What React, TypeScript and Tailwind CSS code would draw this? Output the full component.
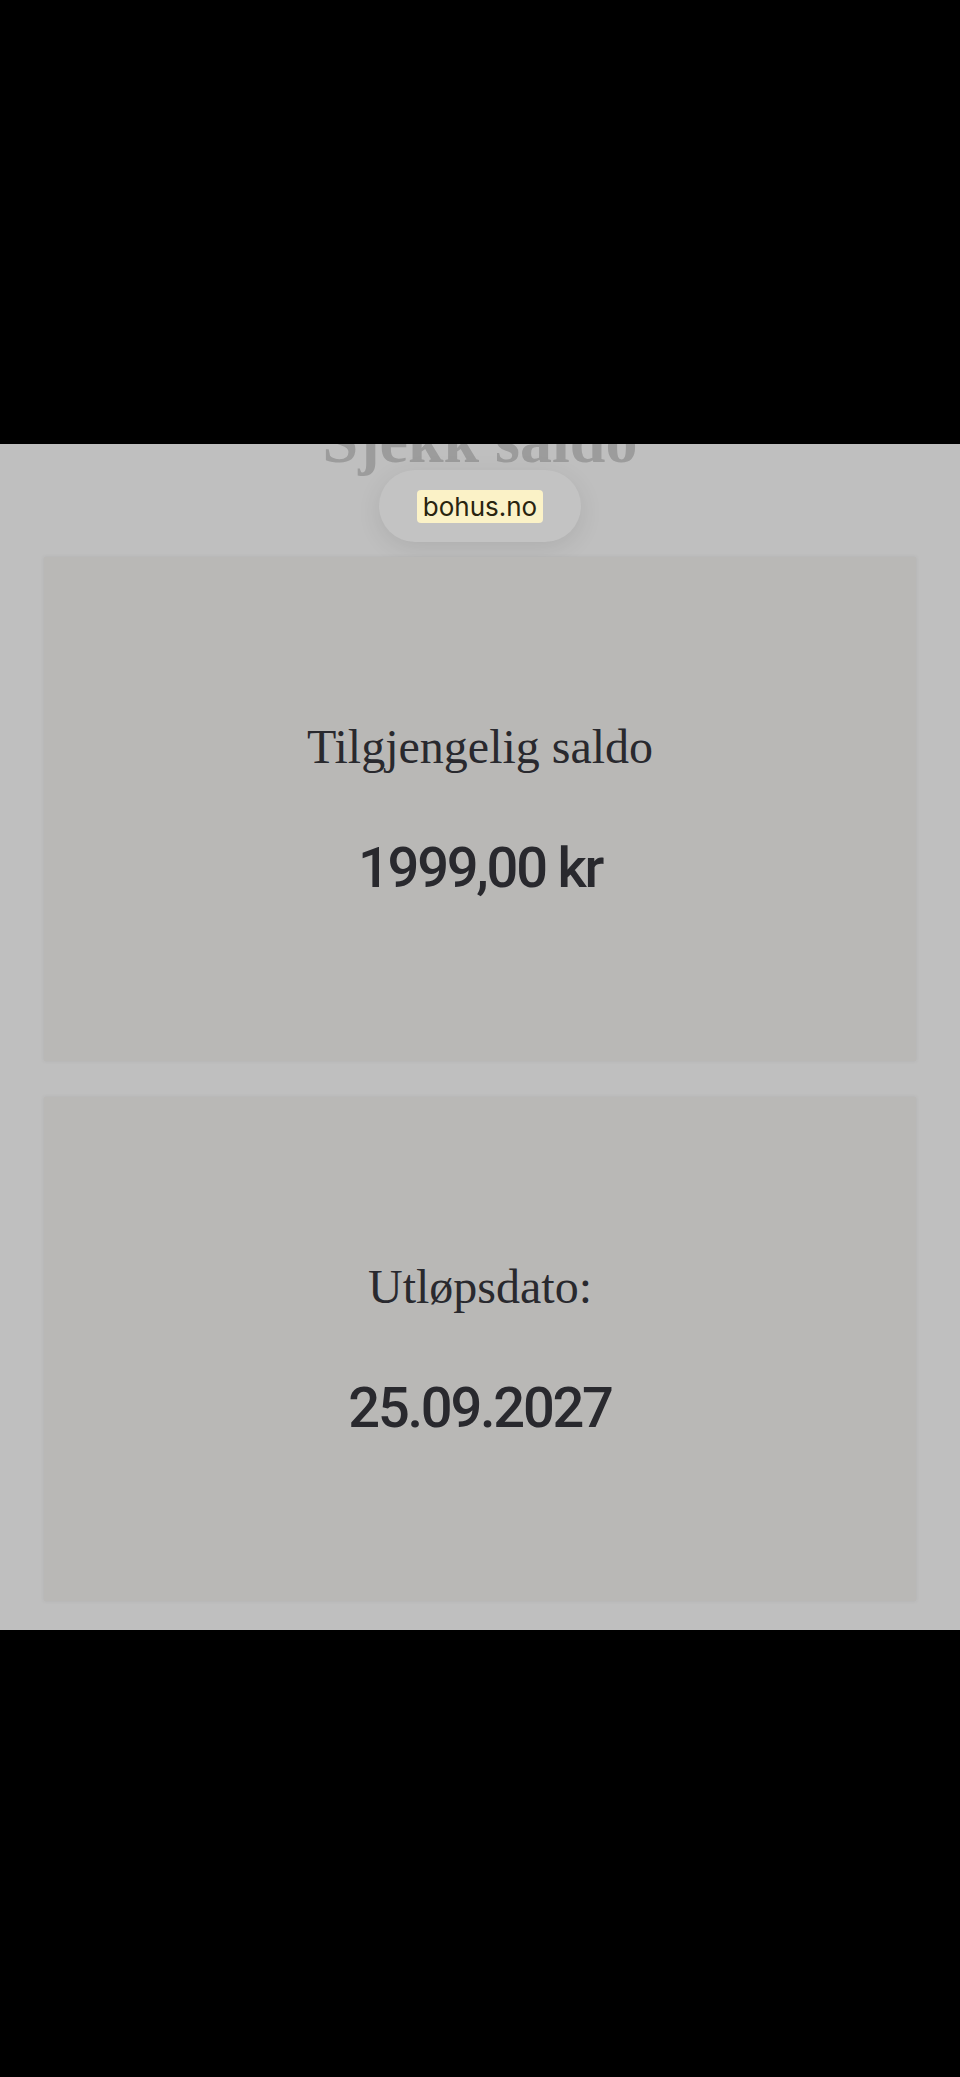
import React from 'react';

interface InfoCard {
  label: string;
  value: string;
}

const cards: InfoCard[] = [
  { label: 'Tilgjengelig saldo', value: '1999,00 kr' },
  { label: 'Utløpsdato:', value: '25.09.2027' },
];

const serif = { fontFamily: '"Liberation Serif", "Times New Roman", serif' };

const App: React.FC = () => {
  return (
    <div className="flex h-[2077px] w-full flex-col bg-black">
      <div className="h-[444px] shrink-0 bg-black" />

      <div className="flex h-[1186px] shrink-0 flex-col items-center overflow-hidden bg-[#bfbfbf] px-[44px]">
        <h1
          className="mt-[-35px] text-center text-[64px] font-bold leading-[64px] text-[#9c9c9c]"
          style={serif}
        >
          Sjekk saldo
        </h1>

        {/* address pill */}
        <div className="mt-[-3px] flex h-[72px] w-[202px] items-center justify-center rounded-full bg-[#c3c3c3] shadow-[0_6px_24px_rgba(0,0,0,0.09)]">
          <span className="rounded-[4px] bg-[#fbf2c7] px-[6px] text-[26px] leading-[33px] text-[#29240f] font-['Inter',sans-serif]">
            bohus.no
          </span>
        </div>

        <div className="mt-[15px] flex w-full flex-col gap-[36px]">
          {cards.map((card) => (
            <div
              key={card.label}
              className="flex h-[504px] flex-col items-center bg-[#b9b8b6] pt-[166px] shadow-[0_0_4px_rgba(0,0,0,0.08)]"
            >
              <p className="text-[48px] leading-[48px] text-[#29292e]" style={serif}>
                {card.label}
              </p>
              <p className="mt-[69px] font-['Roboto',sans-serif] text-[56px] font-medium leading-[56px] tracking-[-0.04em] text-[#29292e]">
                {card.value}
              </p>
            </div>
          ))}
        </div>
      </div>

      <div className="flex-1 bg-black" />
    </div>
  );
};

export default App;
